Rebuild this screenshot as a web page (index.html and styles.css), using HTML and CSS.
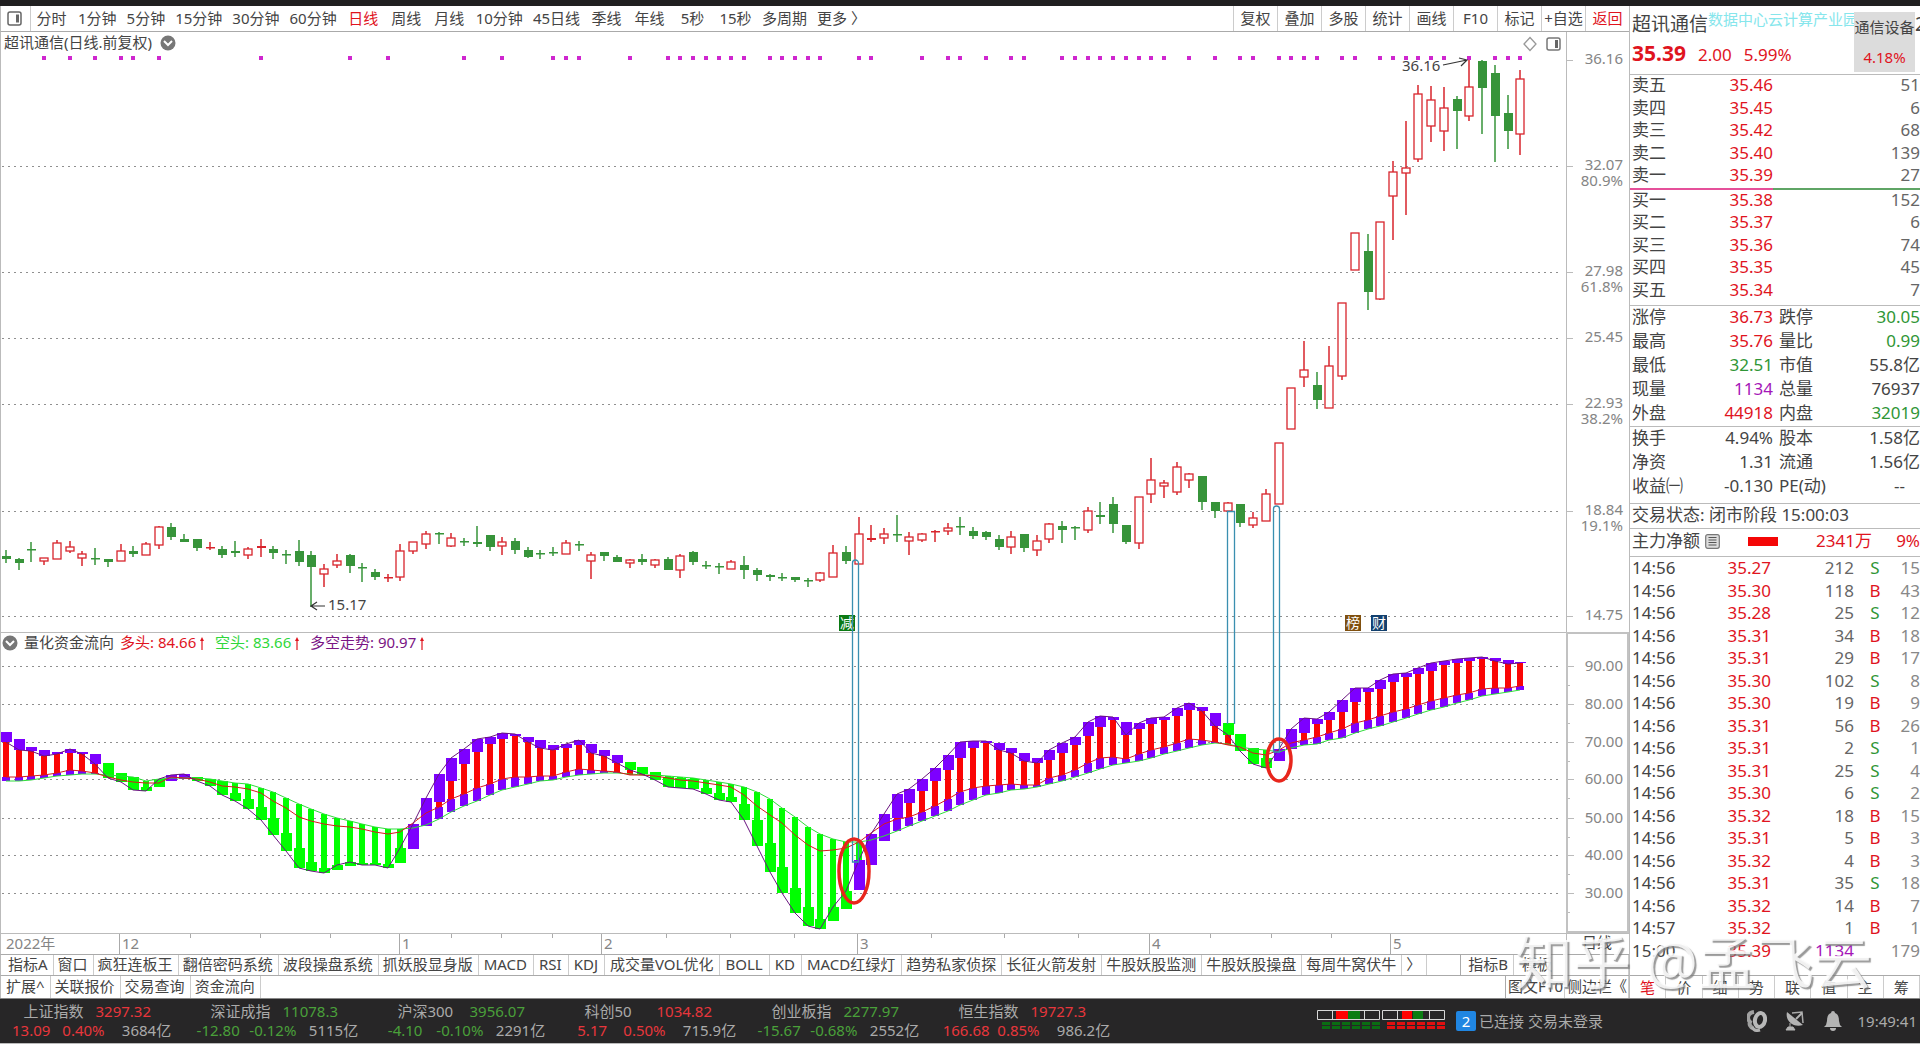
FILE: index.html
```
<!DOCTYPE html>
<html lang="zh-CN">
<head>
<meta charset="utf-8">
<title>超讯通信 日线</title>
<link rel="stylesheet" href="styles.css">
</head>
<body>
<div class="app">
  <div class="main">
    <section class="left">
      <nav class="toolbar">
        <button class="pane-btn" aria-label="面板"><svg width="15" height="15" viewBox="0 0 15 15"><rect x="1" y="1" width="13" height="13" rx="2" fill="none" stroke="#666" stroke-width="1.5"/><path d="M9 3.5h3v8H9z" fill="#666"/></svg></button>
        <div class="periods">
          <button>分时</button><button>1分钟</button><button>5分钟</button><button>15分钟</button><button>30分钟</button><button>60分钟</button><button class="active">日线</button><button>周线</button><button>月线</button><button>10分钟</button><button>45日线</button><button>季线</button><button>年线</button><button>5秒</button><button>15秒</button><button>多周期</button><button>更多 〉</button>
        </div>
        <div class="tools">
          <button>复权</button><button>叠加</button><button>多股</button><button>统计</button><button>画线</button><button>F10</button><button>标记</button><button>+自选</button><button class="active">返回</button>
        </div>
      </nav>
      <svg id="chart" class="chart" viewBox="0 32 1629 922" role="img" aria-label="K线图"></svg>
      <nav class="tabs">
        <button>指标A</button><button>窗口</button><button>疯狂连板王</button><button>翻倍密码系统</button><button>波段操盘系统</button><button>抓妖股显身版</button><button class="latin">MACD</button><button class="latin">RSI</button><button class="latin">KDJ</button><button class="latin">成交量VOL优化</button><button class="latin">BOLL</button><button class="latin">KD</button><button class="latin">MACD红绿灯</button><button>趋势私家侦探</button><button>长征火箭发射</button><button>牛股妖股监测</button><button>牛股妖股操盘</button><button>每周牛窝伏牛</button><button>〉</button>
        <span class="tabs-end"><button>指标B</button><button>模板</button></span>
      </nav>
      <nav class="tabs tabs-ext">
        <button>扩展^</button><button>关联报价</button><button>交易查询</button><button>资金流向</button>
        <span class="tabs-end"><button>图文F10</button><button>侧边栏《</button></span>
      </nav>
    </section>

    <aside class="quote">
      <header class="head">
        <div class="name-row"><h1>超讯通信</h1><span class="tagline">数据中心云计算产业园</span></div>
        <div class="price-row"><strong>35.39</strong><span>2.00</span><span>5.99%</span></div>
        <div class="sector"><span>通信设备</span><b>4.18%</b></div>
        <span class="cut">2</span>
      </header>
      <div class="book asks">
        <span>卖五</span><b>35.46</b><i>51</i>
        <span>卖四</span><b>35.45</b><i>6</i>
        <span>卖三</span><b>35.42</b><i>68</i>
        <span>卖二</span><b>35.40</b><i>139</i>
        <span>卖一</span><b>35.39</b><i>27</i>
      </div>
      <div class="split"></div>
      <div class="book bids">
        <span>买一</span><b>35.38</b><i>152</i>
        <span>买二</span><b>35.37</b><i>6</i>
        <span>买三</span><b>35.36</b><i>74</i>
        <span>买四</span><b>35.35</b><i>45</i>
        <span>买五</span><b>35.34</b><i>7</i>
      </div>
      <div class="stats">
        <span>涨停</span><b class="up">36.73</b><span>跌停</span><b class="down">30.05</b>
        <span>最高</span><b class="up">35.76</b><span>量比</span><b class="down">0.99</b>
        <span>最低</span><b class="down">32.51</b><span>市值</span><b>55.8亿</b>
        <span>现量</span><b class="cur">1134</b><span>总量</span><b>76937</b>
        <span>外盘</span><b class="up">44918</b><span>内盘</span><b class="down">32019</b>
      </div>
      <div class="stats stats-more">
        <span>换手</span><b>4.94%</b><span>股本</span><b>1.58亿</b>
        <span>净资</span><b>1.31</b><span>流通</span><b>1.56亿</b>
        <span>收益㈠</span><b>-0.130</b><span>PE(动)</span><b class="none">--</b>
      </div>
      <div class="state">交易状态: 闭市阶段 15:00:03</div>
      <div class="fund">
        <span>主力净额</span>
        <svg width="15" height="15" viewBox="0 0 15 15"><rect x=".7" y=".7" width="13.6" height="13.6" rx="2" fill="#ddd" stroke="#777" stroke-width="1.2"/><path d="M3.5 3.5h8M3.5 6h8M3.5 8.5h8M3.5 11h8" stroke="#555"/></svg>
        <span class="bar"></span><b>2341万</b><b class="pct">9%</b>
      </div>
      <div class="ticks-wrap">
      <table class="ticks">
        <tbody>
        <tr><td>14:56</td><td>35.27</td><td>212</td><td class="down">S</td><td>15</td></tr>
        <tr><td>14:56</td><td>35.30</td><td>118</td><td class="up">B</td><td>43</td></tr>
        <tr><td>14:56</td><td>35.28</td><td>25</td><td class="down">S</td><td>12</td></tr>
        <tr><td>14:56</td><td>35.31</td><td>34</td><td class="up">B</td><td>18</td></tr>
        <tr><td>14:56</td><td>35.31</td><td>29</td><td class="up">B</td><td>17</td></tr>
        <tr><td>14:56</td><td>35.30</td><td>102</td><td class="down">S</td><td>8</td></tr>
        <tr><td>14:56</td><td>35.30</td><td>19</td><td class="up">B</td><td>9</td></tr>
        <tr><td>14:56</td><td>35.31</td><td>56</td><td class="up">B</td><td>26</td></tr>
        <tr><td>14:56</td><td>35.31</td><td>2</td><td class="down">S</td><td>1</td></tr>
        <tr><td>14:56</td><td>35.31</td><td>25</td><td class="down">S</td><td>4</td></tr>
        <tr><td>14:56</td><td>35.30</td><td>6</td><td class="down">S</td><td>2</td></tr>
        <tr><td>14:56</td><td>35.32</td><td>18</td><td class="up">B</td><td>15</td></tr>
        <tr><td>14:56</td><td>35.31</td><td>5</td><td class="up">B</td><td>3</td></tr>
        <tr><td>14:56</td><td>35.32</td><td>4</td><td class="up">B</td><td>3</td></tr>
        <tr><td>14:56</td><td>35.31</td><td>35</td><td class="down">S</td><td>18</td></tr>
        <tr><td>14:56</td><td>35.32</td><td>14</td><td class="up">B</td><td>7</td></tr>
        <tr><td>14:57</td><td>35.32</td><td>1</td><td class="up">B</td><td>1</td></tr>
        <tr><td>15:00</td><td>35.39</td><td class="cur">1134</td><td></td><td>179</td></tr>
        </tbody>
      </table>
      </div>
      <nav class="side-tabs">
        <button class="active">笔</button><button>价</button><button>细</button><button>势</button><button>联</button><button>值</button><button>主</button><button>筹</button>
      </nav>
    </aside>
    <div class="watermark">知乎 @孟飞云</div>
  </div>

  <footer class="status">
    <div class="indices">
      <div class="index up"><span>上证指数</span><b>3297.32</b><i>13.09</i><i>0.40%</i><em>3684亿</em></div>
      <div class="index down"><span>深证成指</span><b>11078.3</b><i>-12.80</i><i>-0.12%</i><em>5115亿</em></div>
      <div class="index down"><span>沪深300</span><b>3956.07</b><i>-4.10</i><i>-0.10%</i><em>2291亿</em></div>
      <div class="index up"><span>科创50</span><b>1034.82</b><i>5.17</i><i>0.50%</i><em>715.9亿</em></div>
      <div class="index down"><span>创业板指</span><b>2277.97</b><i>-15.67</i><i>-0.68%</i><em>2552亿</em></div>
      <div class="index up"><span>恒生指数</span><b>19727.3</b><i>166.68</i><i>0.85%</i><em>986.2亿</em></div>
    </div>
    <svg class="meter" width="129" height="22" viewBox="0 0 129 22">
      <path d="M19 1h12v9H19z" fill="#f00"/><path d="M31 1h12v9H31z" fill="#0a7d12"/>
      <path d="M85 1h10v9H85z" fill="#f00"/><path d="M96 1h10v9H96z" fill="#0a7d12"/>
      <path d="M.5.5h62v9H.5zM15.5.5v9M47.5.5v9M65.5.5h62v9h-62zM80.5.5v9M112.5.5v9" fill="none" stroke="#d8d8d8"/>
      <path d="M5 13.5h58M5 17.5h58" stroke="#0a6d12" stroke-width="3" stroke-dasharray="8 2"/>
      <path d="M70 13.5h58M70 17.5h58" stroke="#e01010" stroke-width="3" stroke-dasharray="8 2"/>
    </svg>
    <span class="badge">2</span>
    <span class="conn">已连接 交易未登录</span>
    <div class="sys">
      <svg width="20" height="22" viewBox="0 0 20 22"><path d="M7 2C0 3 0 9 3 12c-1 2 0 5 3 6" fill="none" stroke="#a0a0a0" stroke-width="4"/><ellipse cx="13" cy="10" rx="5" ry="7" transform="rotate(12 13 10)" fill="none" stroke="#b8b8b8" stroke-width="4"/><path d="M5 17c2 4 5 4 8 3" fill="none" stroke="#b0b0b0" stroke-width="3"/></svg>
      <svg width="20" height="22" viewBox="0 0 20 22"><path d="M2 2C0 10 7 18 18 15z" fill="#b4b4b4"/><path d="M7 3l10-1 1 11" fill="none" stroke="#aaa" stroke-width="1.5"/><path d="M17 3l-6 6" stroke="#b4b4b4" stroke-width="2"/><path d="M5 13v5M1 20h9l-2-3H3z" fill="#b4b4b4" stroke="#b4b4b4"/></svg>
      <svg width="20" height="22" viewBox="0 0 20 22"><path d="M10 1a2 2 0 0 1 2 2c3 1 4 4 4 8l1 4 2 2H1l2-2 1-4c0-4 1-7 4-8a2 2 0 0 1 2-2z" fill="#b4b4b4"/><path d="M7 18h6a3 3 0 0 1-6 0z" fill="#b4b4b4"/></svg>
      <time>19:49:41</time>
    </div>
  </footer>
</div>
<script src="chart.js"></script>
</body>
</html>
```
FILE: styles.css
```
* { box-sizing: border-box; }
body {
  margin: 0;
  background: #fff;
  color: #444;
  font: 15px/20px "Noto Sans", "Noto Sans CJK SC", sans-serif;
}
button {
  margin: 0;
  padding: 0;
  border: 0;
  background: none;
  color: inherit;
  font: inherit;
  white-space: nowrap;
}
b, i, em { font-weight: 400; font-style: normal; }
.up { color: #e0141e; }
.down { color: #2f9636; }
.cur { color: #a516b8; }

.app {
  min-height: 100vh;
  display: flex;
  flex-direction: column;
  border-top: 6px solid #201f20;
  overflow: hidden;
}
.main { display: flex; position: relative; }
.left { flex: 1; min-width: 0; }

/* period toolbar */
.toolbar {
  display: flex;
  height: 26px;
  border-bottom: 1px solid #aaa;
  border-left: 1px solid #bbb;
}
.toolbar button { padding-bottom: 2px; }
.toolbar .pane-btn { width: 30px; display: flex; align-items: center; justify-content: center; border-right: 1px solid #ccc; padding: 0 3px 0 0; }
.periods { flex: 1; display: flex; gap: 10px; padding-left: 4px; }
.periods button { min-width: 33px; }
.tools { display: flex; }
.tools button { width: 44px; border-left: 1px solid #ccc; }
.toolbar .active, .side-tabs .active { color: #e0141e; }

.chart { display: block; width: 100%; height: auto; }
.chart text { font-size: 15px; fill: #444; }
.chart .axis { fill: #858585; }
.chart .flag { fill: #fff; font-size: 14px; }

/* indicator tabs */
.tabs {
  display: flex;
  height: 21px;
  border-top: 1px solid #aaa;
  border-left: 1px solid #bbb;
  line-height: 18px;
}
.tabs button { padding: 0 5px 2px 4px; border-right: 1px solid #ccc; }
.tabs button:first-child { padding-left: 7px; }
.tabs .latin { padding: 0 6px 2px 5px; }
.tabs-end { display: flex; margin-left: auto; border-left: 1px solid #aaa; }
.tabs-end button:last-child { padding: 0 76px 2px 8px; }
.tabs-ext { height: 23px; line-height: 20px; }
.tabs-ext button:first-child { padding-left: 5px; }
.tabs-ext .tabs-end button { padding: 0 1px 2px 2px; }

/* quote panel */
.quote {
  width: 291px;
  border-left: 1px solid #bbb;
  display: flex;
  flex-direction: column;
  font-size: 17px;
  overflow: hidden;
}
.head { position: relative; height: 69px; padding: 5px 0 0 2px; border-bottom: 1px solid #bbb; }
.name-row { display: flex; height: 26px; white-space: nowrap; }
.name-row h1 { margin: 0; font-size: 19px; font-weight: 400; line-height: 26px; }
.tagline { color: #86e6ec; font-size: 15px; line-height: 17px; }
.price-row { display: flex; align-items: baseline; gap: 12px; color: #e0141e; line-height: 32px; }
.price-row strong { font-size: 21px; font-weight: 700; }
.sector {
  position: absolute; top: 6px; right: 5px;
  width: 61px; height: 60px;
  display: flex; flex-direction: column; align-items: center;
  gap: 10px; padding-top: 5px;
  background: #dcdcdc; font-size: 15px;
}
.sector b { color: #e0141e; }
.cut { position: absolute; top: 8px; left: 285px; font-size: 19px; }

.book {
  display: grid;
  grid-template-columns: 50px 91px 1fr;
  grid-auto-rows: 1fr;
  height: 113px;
  padding-left: 2px;
}
.book b { color: #e0141e; text-align: right; }
.book i { color: #666; text-align: right; }
.split { height: 2px; background: linear-gradient(90deg, #e5509a 143px, #5fa565 143px); }
.bids { height: 115px; padding-bottom: 3px; }
.stats {
  display: grid;
  grid-template-columns: 56px 85px 60px 1fr;
  grid-auto-rows: 24px;
  padding-left: 2px;
  border-top: 1px solid #bbb;
  line-height: 22px;
  white-space: nowrap;
}
.stats b { text-align: right; }
.stats span:nth-child(4n+3) { padding-left: 6px; }
.stats .none { padding-right: 15px; }
.stats-more { padding-bottom: 4px; }
.state { height: 25px; padding-left: 2px; border-top: 1px solid #bbb; line-height: 22px; }
.fund { display: flex; align-items: center; height: 29px; padding: 0 0 3px 2px; border-top: 1px solid #bbb; border-bottom: 1px solid #bbb; color: #e0141e; }
.fund span:first-child { color: #444; }
.fund svg { margin: 0 28px 0 5px; }
.bar { width: 30px; height: 9px; background: #f40606; }
.fund b { width: 94px; text-align: right; }
.fund .pct { width: auto; margin-left: auto; }
.ticks-wrap { flex: 1; }
.ticks { width: 100%; height: 405px; border-collapse: collapse; table-layout: fixed; }
.ticks td { padding: 0; text-align: right; line-height: 20px; }
.ticks td:nth-child(1) { width: 60px; padding-left: 2px; text-align: left; }
.ticks td:nth-child(2) { width: 81px; color: #e0141e; }
.ticks td:nth-child(3) { width: 83px; color: #666; }
.ticks td:nth-child(4) { width: 36px; padding-left: 6px; text-align: center; }
.ticks td:nth-child(5) { color: #888; }
.ticks td.cur { color: #a516b8; }
.side-tabs { display: flex; height: 23px; border-top: 1px solid #aaa; font-size: 15px; }
.side-tabs button { flex: 1; border-right: 1px solid #ccc; }

.watermark {
  position: absolute; right: 48px; bottom: 0;
  color: rgba(255, 255, 255, 0.85);
  font-size: 58px; line-height: 72px;
  text-shadow: 2px 2px 1px rgba(120, 120, 120, 0.75);
  white-space: nowrap;
  pointer-events: none;
}

/* status bar */
.status {
  flex: 1;
  display: flex;
  align-items: center;
  min-height: 45px;
  background: #272627;
  border-top: 1px solid #888;
  border-bottom: 1px solid #bbb;
  color: #aaa;
}
.indices { display: flex; margin-right: 195px; }
.index {
  display: grid;
  grid-template-columns: repeat(24, 1fr);
  width: 187px;
  line-height: 19px;
  white-space: nowrap;
}
.index span { grid-column: 4 / 13; color: #aaa; }
.index b { grid-column: 13 / 25; padding-left: 2px; }
.index i:nth-of-type(1) { grid-column: 1 / 9; text-align: center; }
.index i:nth-of-type(2) { grid-column: 9 / 16; }
.index em { grid-column: 16 / 25; padding-left: 5px; color: #aaa; }
.index.up { color: #e8363c; }
.index.down { color: #4aa03a; }
.badge { width: 20px; height: 20px; margin: 0 3px 0 10px; border-radius: 2px; background: #2086e2; color: #fff; text-align: center; line-height: 20px; }
.sys { display: flex; align-items: center; gap: 18px; margin-left: auto; padding-right: 3px; }
.sys time { margin-left: -4px; }
```
FILE: chart.js
```
const X0 = 6, STEP = 12.725;
const RED = '#d8242c', GREEN = '#37943a';
const x = i => Math.round(X0 + i * STEP);

// direction, high, body top, body bottom, low
const candles = `G 550 556 559 563|G 558 559 563 570|G 542 549 549 562|R 558 558 561 565|R 540 543 559 559|R 541 547 551 553|R 551 554 558 566|G 548 558 559 565|G 559 559 562 567|R 544 551 561 561|G 546 551 554 557|R 542 544 555 555|R 526 527 545 549|G 523 527 537 540|G 534 539 542 542|G 539 539 548 551|R 542 547 548 550|G 546 549 555 558|G 541 551 553 557|R 547 549 555 559|F 539 546 548 557|G 546 549 553 559|G 550 554 554 564|G 540 551 562 566|G 551 555 567 607|R 564 569 574 587|R 554 561 565 568|G 554 555 566 573|G 563 567 568 582|G 569 572 577 580|R 574 577 578 582|R 544 551 577 581|R 542 542 551 554|R 531 534 544 549|G 532 533 534 544|R 533 538 546 547|G 538 541 542 546|G 526 542 544 547|G 535 535 547 551|R 537 542 546 555|G 538 541 550 554|G 547 550 557 558|G 550 553 554 559|G 547 552 553 556|R 540 543 554 554|G 541 544 545 551|R 552 555 561 579|G 552 552 556 561|G 555 557 562 562|R 559 560 563 568|G 554 559 562 565|R 559 560 565 568|G 557 559 570 570|R 554 556 570 578|G 551 552 562 565|G 561 565 566 569|G 563 566 567 574|R 560 562 569 569|G 556 565 570 579|G 568 570 575 581|G 574 575 577 581|G 573 577 577 581|G 577 577 580 582|G 578 580 581 587|R 572 573 580 582|R 545 553 577 577|G 546 552 561 564|R 517 534 564 564|F 525 538 540 542|R 528 534 538 544|G 515 534 534 542|R 532 537 541 555|R 533 534 540 542|R 530 531 531 542|R 523 528 531 535|G 517 526 527 535|G 527 531 536 539|G 531 532 537 540|G 535 539 547 550|R 531 537 547 554|G 534 534 548 552|R 535 541 550 556|R 523 524 539 543|G 521 526 530 543|G 526 527 528 540|R 507 511 530 533|G 502 515 517 524|G 497 504 524 533|G 525 525 542 544|R 497 497 543 549|R 458 480 494 503|R 480 483 486 498|R 462 467 492 495|R 473 474 480 488|G 476 476 502 510|G 502 502 511 518|R 502 503 511 511|G 504 504 523 527|R 512 518 525 528|R 489 494 521 521|R 443 443 504 504|R 388 388 429 429|R 341 370 377 387|G 372 385 400 409|R 346 366 408 408|R 303 303 376 380|R 233 233 270 270|G 234 251 292 310|R 222 222 299 300|R 161 172 196 240|R 121 168 173 215|R 85 94 159 162|R 86 100 126 142|R 87 108 131 151|G 96 99 111 149|R 58 87 116 121|G 60 61 88 134|G 65 73 116 162|G 95 113 131 149|R 70 79 134 155`
  .split('|').map(r => r.split(' ')).map(r => [r[0], ...r.slice(1).map(Number)]);

// colour, trend box top, trend box bottom, long line, short line
const flow = `P 732 742 777 781|P 739 750 777 781|P 747 751 776 780|P 750 756 775 778|P 752 754 773 776|P 749 753 770 775|P 752 754 771 774|P 754 764 773 774|G 763 778 777 775|G 773 782 780 776|G 777 790 782 777|G 787 791 783 781|G 779 787 783 779|P 775 781 777 778|P 774 779 778 778|G 777 781 779 778|G 779 786 782 779|G 781 795 786 781|G 793 801 787 783|G 799 809 789 784|G 807 820 793 788|G 818 835 801 792|G 833 851 808 798|G 848 868 817 804|G 862 871 821 809|G 868 873 824 814|G 865 870 826 818|G 862 866 827 821|G 863 865 829 824|G 863 865 832 827|G 864 868 834 829|G 848 863 832 829|P 824 849 823 828|P 798 826 813 825|P 774 802 807 819|P 758 781 799 812|P 749 764 794 806|P 739 752 788 801|P 737 744 784 795|P 733 739 779 790|P 734 736 777 787|P 737 742 777 784|P 740 748 776 781|P 745 750 776 780|P 744 748 772 777|P 740 745 769 775|P 744 753 770 774|P 750 756 771 773|P 755 763 772 773|G 762 770 775 774|G 767 774 775 775|G 772 780 776 775|G 777 787 778 776|G 778 788 780 777|G 779 789 781 778|G 788 794 783 780|G 793 800 785 782|G 797 802 787 784|G 804 820 795 787|G 820 846 806 792|G 843 872 815 799|G 867 893 823 808|G 888 913 835 817|G 907 926 845 827|G 919 929 851 834|G 907 921 850 839|G 891 909 848 842|P 860 890 842 842|P 834 865 833 840|P 814 841 824 836|P 794 818 819 831|P 789 803 817 826|P 779 791 812 821|P 768 781 806 816|P 755 770 799 811|P 742 758 792 805|P 741 748 788 800|P 741 743 786 795|P 743 750 785 793|P 748 753 784 790|P 753 761 785 789|P 758 763 785 787|P 750 760 778 784|P 743 753 775 781|P 737 745 770 777|P 722 736 763 773|P 716 727 758 769|P 717 720 757 765|P 722 735 759 763|P 723 729 754 761|P 718 724 750 758|P 717 720 747 754|P 708 716 743 751|P 703 710 739 748|P 707 711 740 745|P 713 726 742 743|G 723 735 745 744|G 734 751 747 747|G 748 764 753 749|G 758 768 755 750|P 749 761 750 752|P 729 749 743 748|P 718 733 740 745|P 719 724 737 744|P 712 720 733 740|P 700 712 729 738|P 688 702 723 733|P 688 692 720 729|P 680 689 716 726|P 674 682 712 722|P 673 677 709 718|P 668 674 705 714|P 663 671 701 710|P 661 665 698 707|P 659 663 695 703|P 658 661 693 700|P 657 659 689 696|P 658 661 688 694|P 660 664 688 692|P 662 663 686 690`
  .split('|').map(r => r.split(' ')).map(r => [r[0], ...r.slice(1).map(Number)]);

const signals = [3, 5, 7, 9, 10, 12, 20, 27, 30, 36, 39, 43, 44, 45, 49, 52, 53, 54, 55, 56, 57, 58, 60, 61, 62, 63, 64, 67, 68, 72, 74, 75, 77, 79, 80, 83, 84, 85, 86, 87, 88, 89, 90, 91, 93, 95, 97, 98, 100, 101, 102, 103, 105, 106, 108, 109, 110, 111, 112, 113, 115, 117, 118, 119];

const rect = (l, t, w, h, fill) => `<rect x="${l}" y="${t}" width="${w}" height="${h}" fill="${fill}"/>`;
const path = (d, stroke, w = 1, extra = '') => `<path d="${d}" fill="none" stroke="${stroke}" stroke-width="${w}" ${extra}/>`;
const label = (l, y, s, cls = '', anchor = 'start', extra = '') => `<text x="${l}" y="${y}" class="${cls}" text-anchor="${anchor}" ${extra}>${s}</text>`;
const out = [];

// grids and scales
[166, 272, 338, 404, 511, 616, 666, 704, 742, 779, 818, 855, 893].forEach(y =>
  out.push(path(`M2 ${y}.5H1562`, '#8f8f8f', 1, 'stroke-dasharray="2 4"')));
[[60, '36.16'], [166, '32.07', '80.9%'], [272, '27.98', '61.8%'], [338, '25.45'], [404, '22.93', '38.2%'], [511, '18.84', '19.1%'], [616, '14.75']].forEach(([y, a, b]) => {
  out.push(path(`M1567 ${y}.5h6`, '#bbb'), label(1623, y + 4, a, 'axis', 'end'));
  if (b) out.push(label(1623, y + 20, b, 'axis', 'end'));
});
[666, 704, 742, 779, 818, 855, 893].forEach((y, i) =>
  out.push(path(`M1567 ${y}.5h7M1567 ${y + 19}.5h3`, '#bbb'), label(1623, y + 5, (90 - i * 10) + '.00', 'axis', 'end')));
out.push(path('M.5 32V954M1566.5 32V954M0 632.5H1629M0 933.5H1629', '#bbb'));
out.push(path('M1567 633H1628V932H1567z', '#c2c2c2', 2));

// date axis
[[120, '12'], [400, '1'], [602, '2'], [858, '3'], [1150, '4'], [1391, '5']].forEach(([l, s]) =>
  out.push(path(`M${l - 0.5} 934v20`, '#aaa'), label(l + 2, 949, s, 'axis')));
out.push(label(6, 949, '2022年', 'axis'), label(1582, 948, '日线'));
[190, 260, 330, 451, 501, 552, 666, 730, 794, 931, 1004, 1078, 1210, 1271, 1331].forEach(l =>
  out.push(path(`M${l}.5 934v4`, '#aaa')));

// candles
candles.forEach(([k, hi, top, bot, lo], i) => {
  const c = x(i), col = k === 'G' ? GREEN : RED, h = Math.max(bot - top, 1);
  out.push(path(`M${c} ${hi}V${top}M${c} ${bot}V${lo}`, col, 1.5));
  if (k === 'R' && h > 2) out.push(`<rect x="${c - 4}" y="${top}" width="8" height="${h}" fill="#fff" stroke="${col}" stroke-width="1.3"/>`);
  else out.push(rect(c - 4, top, 9, Math.max(h, 1.5), col));
});
signals.forEach(i => out.push(rect(x(i) - 2, 56, 4, 4, '#cf26cf')));

// fund flow
flow.forEach(([k, t, b, r, g], i) => {
  const c = x(i), col = k === 'G' ? '#00ff00' : '#7d00ff';
  if (b < r) out.push(rect(c - 3, b, 6, r - b, '#fa0505'));
  if (g < t) out.push(rect(c - 3, g, 6, t - g, '#00ff00'));
  out.push(rect(c - 5, t, 11, b - t, col));
  if (k === 'P' && b < r && g > r) out.push(rect(c - 4, r, 8, g - r, '#7d00ff'));
});
const line = f => 'M' + flow.map((r, i) => x(i) + ' ' + f(r, i)).join('L');
out.push(path(line(r => r[4]), '#2fdd3a', 1), path(line(r => r[3]), '#d8181c', 1));
out.push(path(line((r, i) => {
  const n = flow[i ? i - 1 : 1], rising = i ? r[1] + r[2] < n[1] + n[2] : false;
  return rising ? r[1] : r[2];
}), '#6a1580', 1));

// event flags
[[839, '#0b7a14', '减'], [1345, '#80500f', '榜'], [1371, '#12406e', '财']].forEach(([l, c, s]) =>
  out.push(rect(l, 615, 16, 16, c), label(l + 8, 628, s, 'flag', 'middle')));

// annotations
out.push(path('M852.5 862V563a3 3 0 0 1 6 0V862zM1227.5 724V511.5h7V724M1273.5 752V509a3 3 0 0 1 6 0V752z', '#3a8fb0', 1.3));
out.push('<ellipse cx="854" cy="871" rx="15" ry="32" fill="none" stroke="#e8261c" stroke-width="3.5"/><ellipse cx="1279" cy="760" rx="12" ry="21" fill="none" stroke="#e8261c" stroke-width="3.5"/>');
out.push(label(1402, 71, '36.16'), path('M1443 65L1467 60M1459 58l8 2-6 6', '#333', 1.2));
out.push(label(328, 610, '15.17'), path('M325 606H311M317 602l-6 4 6 4', '#333', 1.2));

// pane headings
const chevron = (cx, cy) => `<circle cx="${cx}" cy="${cy}" r="7.5" fill="#777"/>` + path(`M${cx - 4} ${cy - 2}l4 4 4-4`, '#fff', 2);
out.push(label(4, 48, '超讯通信(日线.前复权)'), chevron(168, 43), chevron(10, 643));
out.push(label(24, 648, '量化资金流向'));
out.push(label(120, 648, '多头: 84.66', '', 'start', 'style="fill:#e0141e"'));
out.push(label(215, 648, '空头: 83.66', '', 'start', 'style="fill:#2fd73a"'));
out.push(label(310, 648, '多空走势: 90.97', '', 'start', 'style="fill:#7a1585"'));
[202, 297, 422].forEach(l => out.push(path(`M${l} 650V639`, '#e0141e', 1.2), `<path d="M${l - 2} 641h4l-2-4z" fill="#e0141e"/>`));
out.push(path('M1530 37.5l6 6.5-6 6.5-6-6.5z', '#999', 1.3));
out.push('<rect x="1547" y="38" width="13" height="12" rx="2" fill="none" stroke="#777" stroke-width="1.5"/>', rect(1555, 40, 3, 8, '#666'));

document.getElementById('chart').innerHTML = out.join('');
```
